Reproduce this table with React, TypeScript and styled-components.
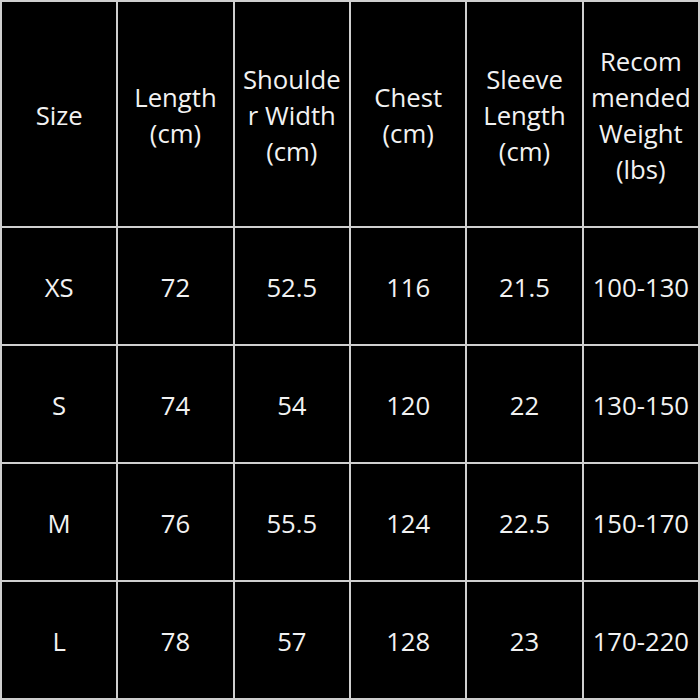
import React from "react";
import styled, { createGlobalStyle } from "styled-components";

const Global = createGlobalStyle`
  html, body { margin: 0; padding: 0; background: #000; }
`;

const Table = styled.div`
  box-sizing: border-box;
  width: 700px;
  height: 700px;
  padding: 2px;
  display: grid;
  grid-template-columns: repeat(6, 1fr);
  grid-template-rows: 224px repeat(4, 1fr);
  gap: 2px;
  background: #cfcfcf;
  font-family: "Open Sans", "DejaVu Sans", sans-serif;
`;

const Cell = styled.div`
  background: #000;
  color: #f2f2f2;
  font-size: 25.7px;
  line-height: 36px;
  display: flex;
  align-items: center;
  justify-content: center;
  text-align: center;
  padding: 3px 6px 0;
  overflow-wrap: anywhere;
  min-width: 0;
`;

const headers = [
  "Size",
  "Length (cm)",
  "Shoulder Width (cm)",
  "Chest (cm)",
  "Sleeve Length (cm)",
  "Recommended Weight (lbs)",
];

const rows = [
  ["XS", "72", "52.5", "116", "21.5", "100-130"],
  ["S", "74", "54", "120", "22", "130-150"],
  ["M", "76", "55.5", "124", "22.5", "150-170"],
  ["L", "78", "57", "128", "23", "170-220"],
];

export default function App() {
  return (
    <>
      <Global />
      <Table>
        {headers.map((h) => (
          <Cell key={h}>{h}</Cell>
        ))}
        {rows.flatMap((r, i) =>
          r.map((v, j) => <Cell key={`${i}-${j}`}>{v}</Cell>)
        )}
      </Table>
    </>
  );
}
